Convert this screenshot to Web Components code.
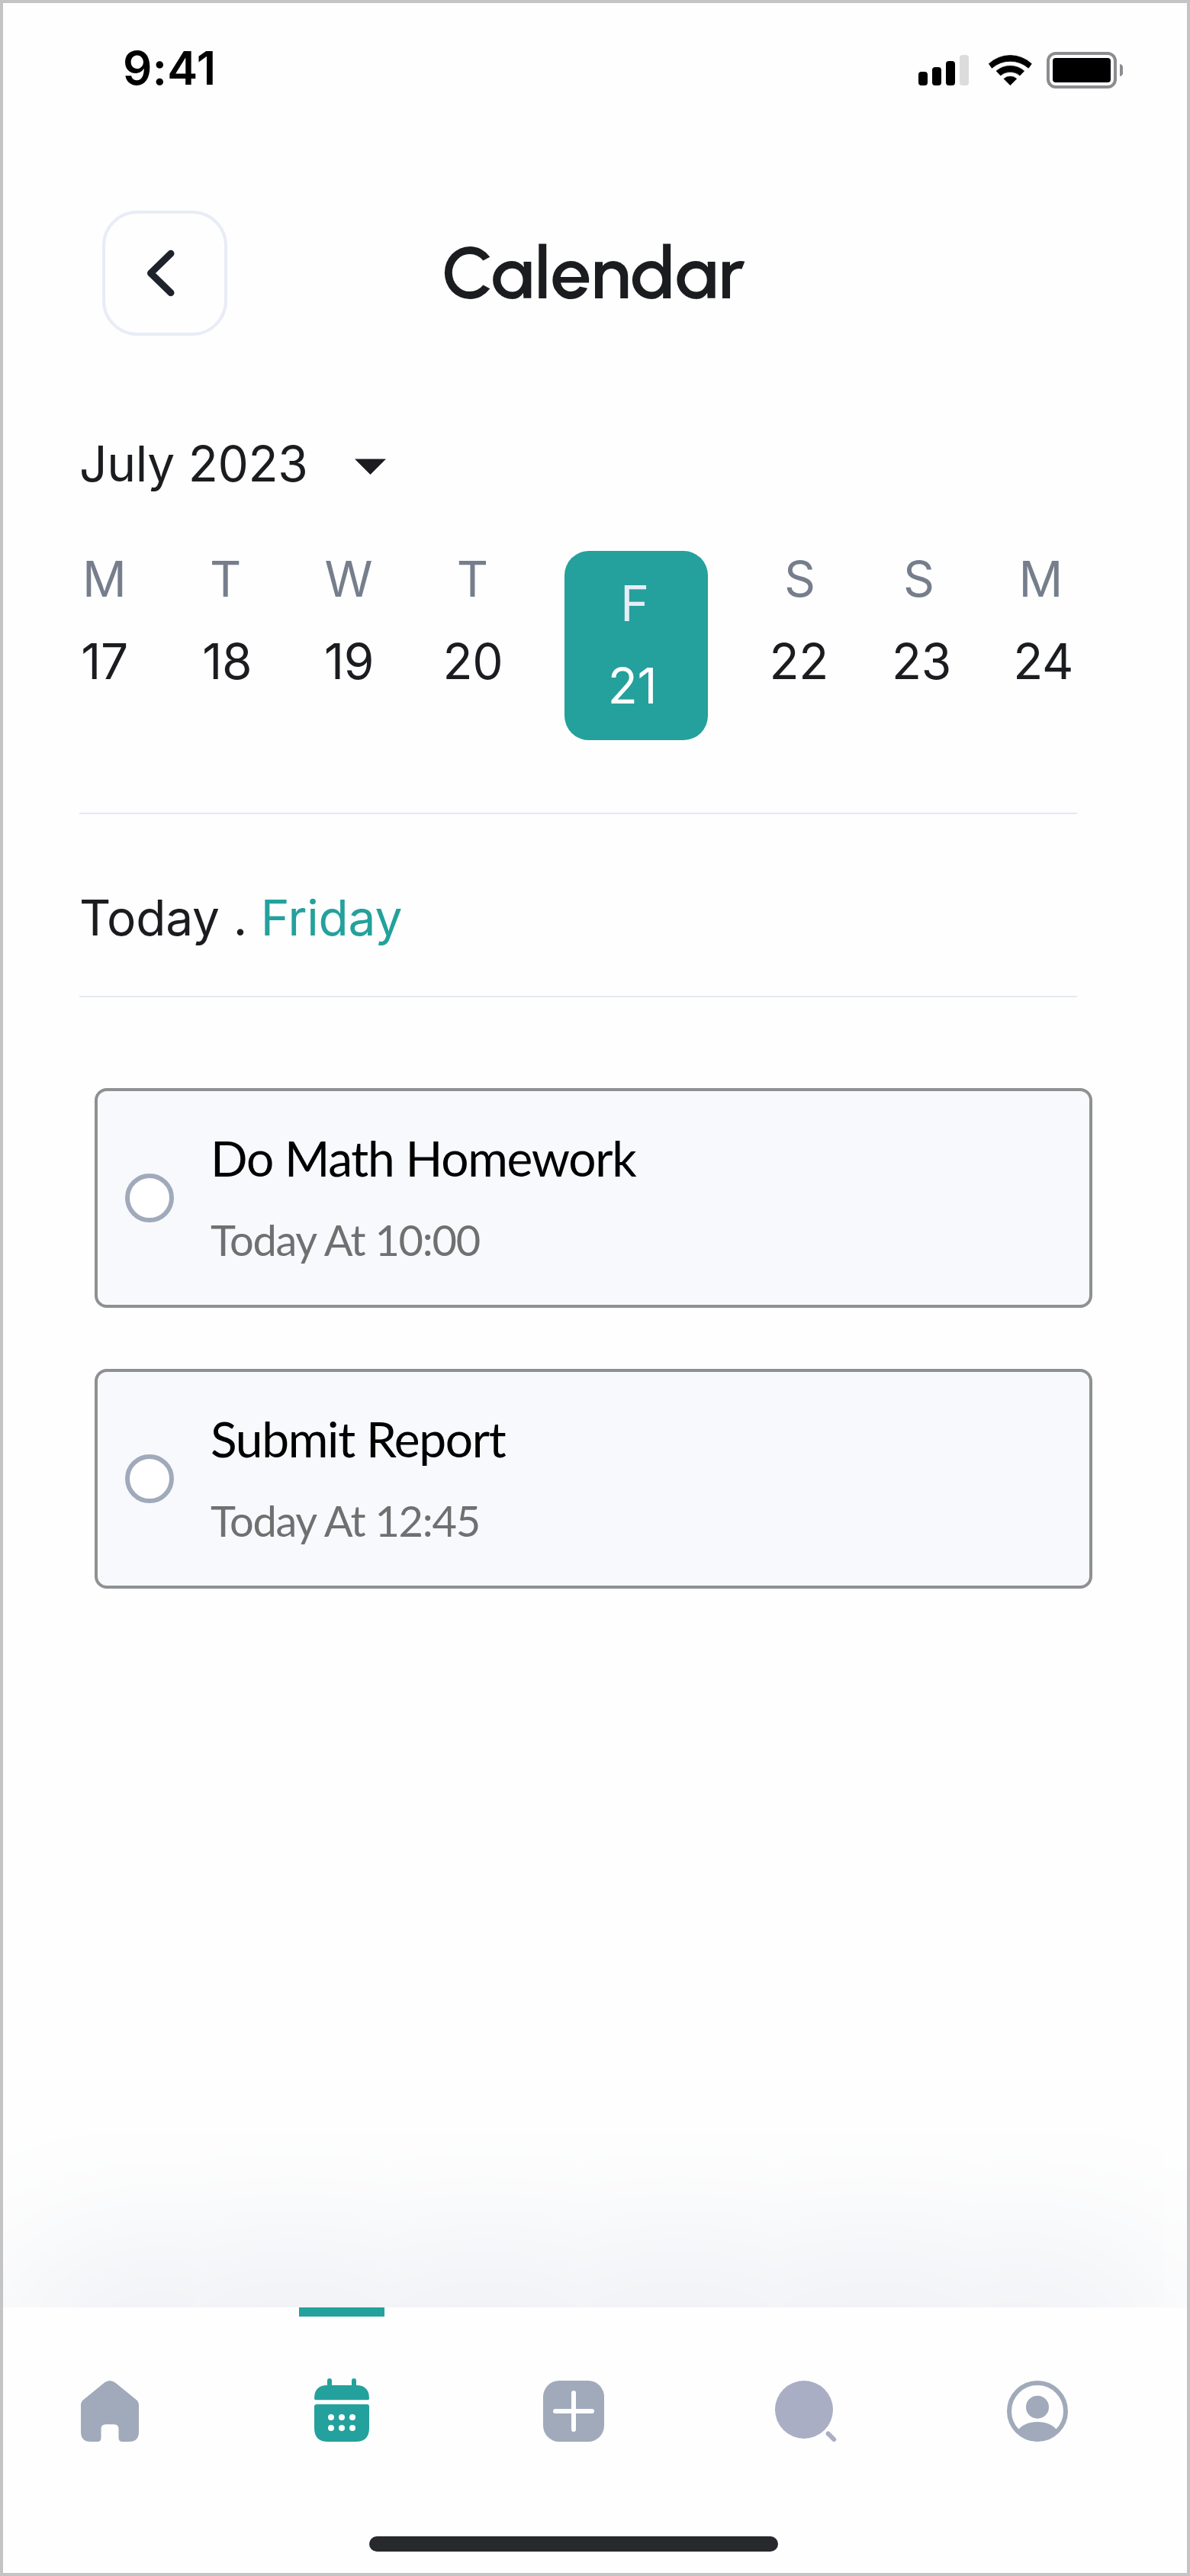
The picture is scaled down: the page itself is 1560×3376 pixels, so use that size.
<!DOCTYPE html>
<html lang="en">
<head>
<meta charset="utf-8">
<title>Calendar</title>
<style>
  html, body { margin: 0; padding: 0; background: #fefefe; }
  body {
    --teal: #24a19c; --ink: #1b1c1f; --muted: #767e8c; --icon: #a0aaba; --line: #e3e8f1;
    font-family: Inter, "Liberation Sans", sans-serif; color: var(--ink);
  }
</style>
</head>
<body>
<app-screen>
  <status-bar time="9:41"></status-bar>
  <page-header>Calendar</page-header>
  <month-picker>July 2023</month-picker>
  <week-strip>
    <day-cell day="M" date="17"></day-cell>
    <day-cell day="T" date="18" style="--dl:-2.6px;--nl:1.4px"></day-cell>
    <day-cell day="W" date="19" style="--nl:1px"></day-cell>
    <day-cell day="T" date="20" style="--dl:-1.2px"></day-cell>
    <day-cell day="F" date="21" selected style="--dl:-3.8px;--nl:-10px"></day-cell>
    <day-cell day="S" date="22" style="--dl:1px;--nl:-1.6px"></day-cell>
    <day-cell day="S" date="23" style="--dl:-4.8px;--nl:1.8px"></day-cell>
    <day-cell day="M" date="24" style="--dl:-5.2px;--nl:1.2px"></day-cell>
  </week-strip>
  <today-heading>Today . <span slot="day">Friday</span></today-heading>
  <task-list>
    <task-card>Do Math Homework<span slot="time">Today At 10:00</span></task-card>
    <task-card>Submit Report<span slot="time">Today At 12:45</span></task-card>
  </task-list>
  <tab-bar slot="footer">
    <tab-item icon="home"></tab-item>
    <tab-item icon="calendar" active></tab-item>
    <tab-item icon="add"></tab-item>
    <tab-item icon="search"></tab-item>
    <tab-item icon="profile"></tab-item>
  </tab-bar>
</app-screen>
<script>
class Base extends HTMLElement {
  connectedCallback() {
    if (this.shadowRoot) return;
    const root = this.attachShadow({ mode: 'open' });
    const t = document.createElement('template');
    t.innerHTML = this.view();
    root.append(t.content.cloneNode(true));
  }
}

customElements.define('app-screen', class extends Base {
  view() { return `<style>
    :host { display: flex; flex-direction: column; box-sizing: border-box; width: 1560px; height: 3376px;
      border: 4px solid #c4c4c4; background: #fefefe; overflow: hidden; }
    .footer { margin-top: auto; }
  </style><slot></slot><div class="footer"><slot name="footer"></slot></div>`; }
});

customElements.define('status-bar', class extends Base {
  view() { return `<style>
    :host { display: flex; justify-content: space-between; align-items: flex-start; box-sizing: border-box;
      height: 172px; padding: 0 84px 0 157px; color: #000; }
    .time { margin-top: 49px; font-weight: 600; font-size: 60px; line-height: 72px; letter-spacing: .4px; }
    svg { display: block; margin-top: 64px; }
  </style>
  <span class="time">${this.getAttribute('time')}</span>
  <svg width="268" height="48" viewBox="0 0 268 48">
    <rect x="0" y="26" width="12" height="18" rx="4"/>
    <rect x="18" y="20" width="12" height="24" rx="4"/>
    <rect x="36" y="12" width="12" height="32" rx="4"/>
    <rect x="54" y="4" width="12" height="40" rx="4" fill="#dcdcdc"/>
    <path d="M92.4 15.6A41 41 0 0 1 148.3 15.6L144.3 21.2A36.5 36.5 0 0 0 96.3 21.2Z" stroke="#000" stroke-width=".8" stroke-linejoin="round"/>
    <path d="M102 25A28 28 0 0 1 138.7 25L133 31A19.5 19.5 0 0 0 107.7 31Z" stroke="#000" stroke-width=".6" stroke-linejoin="round"/>
    <path d="M111.9 35.2A13 13 0 0 1 128.8 35.2L120.35 43.7Z" stroke="#000" stroke-width=".6" stroke-linejoin="round"/>
    <rect x="170" y="2" width="88" height="44" rx="10" fill="none" stroke="#8c8c90" stroke-width="4"/>
    <rect x="176" y="8" width="76" height="32" rx="4"/>
    <path d="M264 16A5 8 0 0 1 264 32Z" fill="#8c8c90"/>
  </svg>`; }
});

customElements.define('page-header', class extends Base {
  view() { return `<style>
    :host { display: flex; align-items: center; margin: 100px 0 0 130px; height: 164px; }
    button { box-sizing: border-box; width: 164px; height: 164px; padding: 0; border: 4px solid #e8ecf6;
      border-radius: 46px; background: #fefefe; }
    svg { display: block; }
    h1 { margin: 0 0 0 281px; font: 600 96px/116px Urbanist, Inter, sans-serif; white-space: nowrap; }
  </style>
  <button aria-label="Back"><svg width="156" height="156" viewBox="0 0 156 156" fill="none">
    <path d="M86 52.3L59.5 78L86 103.7" stroke="#1d222b" stroke-width="9" stroke-linecap="round" stroke-linejoin="round"/></svg></button>
  <h1><slot></slot></h1>`; }
});

customElements.define('month-picker', class extends Base {
  view() { return `<style>
    :host { display: flex; align-items: center; margin: 119.5px 0 0 100px; font-size: 64px; line-height: 96px; letter-spacing: -.3px; }
    svg { margin: 7px 0 0 62px; }
  </style><span><slot></slot></span>
  <svg width="41" height="21" viewBox="0 0 41 21"><path d="M0 .5H41L20.5 21Z" fill="#1b1c1f"/></svg>`; }
});

customElements.define('week-strip', class extends Base {
  view() { return `<style>
    :host { display: grid; grid-template-columns: 160px 160px 163px 160px 268px 159px 160px 80px;
      align-items: start; margin: 55.3px 0 0 93px; height: 259.2px; }
  </style><slot></slot>`; }
});

customElements.define('day-cell', class extends Base {
  view() { return `<style>
    :host { display: flex; flex-direction: column; align-items: center; gap: 12px; width: 80px; font-size: 64px; line-height: 96px; }
    .day { color: var(--muted); margin-left: var(--dl, 0); }
    .date { margin-left: var(--nl, 0); letter-spacing: -.3px; }
    :host([selected]) { box-sizing: border-box; width: 188px; height: 248px; margin-top: 11.2px; padding-top: 21px;
      border-radius: 32px; background: var(--teal); }
    :host([selected]) .day { color: #e8ecf6; }
    :host([selected]) .date { color: #fff; }
  </style><span class="day">${this.getAttribute('day')}</span><span class="date">${this.getAttribute('date')}</span>`; }
});

customElements.define('today-heading', class extends Base {
  view() { return `<style>
    :host { display: block; margin: 95px 0 0 100px; width: 1308px; box-sizing: border-box; padding: 88px 0 54px;
      border: solid var(--line); border-width: 2px 0; font-size: 64px; line-height: 96px; letter-spacing: -.2px; }
    .day { color: var(--teal); }
  </style><slot></slot><span class="day"><slot name="day"></slot></span>`; }
});

customElements.define('task-list', class extends Base {
  view() { return `<style>
    :host { display: flex; flex-direction: column; gap: 80px; margin: 119px 0 0 120px; width: 1308px; }
  </style><slot></slot>`; }
});

customElements.define('task-card', class extends Base {
  view() { return `<style>
    :host { display: flex; align-items: center; gap: 48px; box-sizing: border-box; height: 288px; padding-left: 36px;
      border: 4px solid #8f9092; border-radius: 16px; background: #f8f9fd; font-family: Lato, sans-serif; }
    .check { box-sizing: border-box; width: 64px; height: 64px; border: 6px solid var(--icon); border-radius: 50%; background: #fff; }
    .text { display: flex; flex-direction: column; gap: 35px; padding-bottom: 3.6px; white-space: nowrap; }
    .title { font-size: 64px; line-height: 77px; letter-spacing: -1.28px; color: #000; }
    .time { font-size: 56px; line-height: 67px; letter-spacing: -1.3px; color: #707070; }
  </style><span class="check"></span>
  <div class="text"><span class="title"><slot></slot></span><span class="time"><slot name="time"></slot></span></div>`; }
});

customElements.define('tab-bar', class extends Base {
  view() { return `<style>
    :host { display: block; height: 348px; background: #fefefe; box-shadow: 0 -50px 300px -34px rgb(223, 227, 235); }
    nav { display: flex; justify-content: space-between; padding: 0 148px 0 92px; }
    .home { width: 536px; height: 20px; margin: 116px 0 0 480px; border-radius: 10px; background: #28292d; }
  </style><nav><slot></slot></nav><div class="home"></div>`; }
});

const ICONS = {
  home: `<path d="M41 10.6Q48 5.4 55 10.6L82.6 33Q86 36 86 40V75Q86 88 73 88H64.5Q59.5 88 59.5 83V71.5Q59.5 65.3 53.5 65.3H42.5Q36.5 65.3 36.5 71.5V83Q36.5 88 31.5 88H23Q10 88 10 75V40Q10 36 13.4 33Z"/>`,
  calendar: `<path d="M12 31.5Q12 14 29 14V8A3 3 0 0 1 35 8V14H61V8A3 3 0 0 1 67 8V14Q84 14 84 31.5Q84 33.3 82 33.3H14Q12 33.3 12 31.5Z"/>
    <path d="M15 39H81Q84 39 84 42V70Q84 88 66 88H30Q12 88 12 70V42Q12 39 15 39Z"/>
    <g fill="#fefefe"><circle cx="34" cy="56" r="4"/><circle cx="48" cy="56" r="4"/><circle cx="62" cy="56" r="4"/>
    <circle cx="34" cy="70" r="4"/><circle cx="48" cy="70" r="4"/><circle cx="62" cy="70" r="4"/></g>`,
  add: `<rect x="8" y="8" width="80" height="80" rx="21"/><path d="M24 48H72M48 24V72" stroke="#fefefe" stroke-width="6" stroke-linecap="round"/>`,
  search: `<g fill="#a9aec5"><circle cx="46" cy="46" r="38"/><path d="M77.6 77.4L85.2 85" stroke="#a9aec5" stroke-width="6" stroke-linecap="round"/></g>`,
  profile: `<circle cx="48" cy="48" r="37" fill="none" stroke="currentColor" stroke-width="6"/><circle cx="48" cy="42.7" r="15"/>
    <path d="M22.5 72.5C28 66 37 62 48 62S68 66 73.5 72.5A37 37 0 0 1 22.5 72.5Z"/>`
};

customElements.define('tab-item', class extends Base {
  view() { return `<style>
    :host { display: flex; flex-direction: column; align-items: center; width: 96px; color: var(--icon); }
    :host([active]) { color: var(--teal); }
    .mark { width: 112px; height: 12px; margin-bottom: 76px; }
    :host([active]) .mark { background: var(--teal); }
    svg { display: block; }
  </style><div class="mark"></div>
  <svg width="96" height="96" viewBox="0 0 96 96" fill="currentColor">${ICONS[this.getAttribute('icon')]}</svg>`; }
});
</script>
</body>
</html>
